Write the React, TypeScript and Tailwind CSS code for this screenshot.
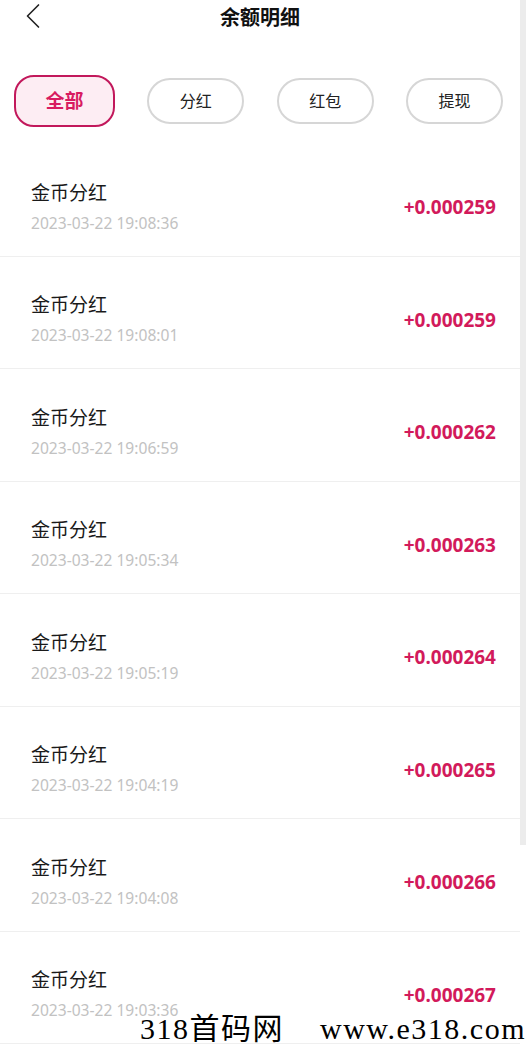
import { ChevronLeft } from "lucide-react";

const tabs = ["全部", "分红", "红包", "提现"];

const records = [
  { time: "2023-03-22 19:08:36", amount: "+0.000259" },
  { time: "2023-03-22 19:08:01", amount: "+0.000259" },
  { time: "2023-03-22 19:06:59", amount: "+0.000262" },
  { time: "2023-03-22 19:05:34", amount: "+0.000263" },
  { time: "2023-03-22 19:05:19", amount: "+0.000264" },
  { time: "2023-03-22 19:04:19", amount: "+0.000265" },
  { time: "2023-03-22 19:04:08", amount: "+0.000266" },
  { time: "2023-03-22 19:03:36", amount: "+0.000267" },
];

export default function App() {
  return (
    <div
      className="relative flex h-[1045px] w-[526px] overflow-hidden bg-white"
      style={{ fontFamily: '"Noto Sans", "Noto Sans CJK SC", sans-serif' }}
    >
      <div className="flex w-[520px] flex-col">
        {/* 顶部标题 */}
        <div className="relative flex h-[36px] items-center justify-center">
          <ChevronLeft className="absolute left-[11px] top-[-6px] h-[44px] w-[44px] text-[#222]" strokeWidth={0.9} />
          <h1 className="text-[20px] font-bold leading-none text-[#111]">余额明细</h1>
        </div>

        {/* 筛选标签 */}
        <div className="mt-[39px] flex h-[52px] items-center justify-between pl-[14px] pr-[17px]">
          {tabs.map((t, i) =>
            i === 0 ? (
              <div
                key={t}
                className="flex h-[52px] w-[101px] items-center justify-center rounded-[20px] border-2 border-[#c2185b] bg-[#fdedf3] text-[19px] font-bold text-[#d81b60]"
              >
                {t}
              </div>
            ) : (
              <div
                key={t}
                className="flex h-[46px] w-[97px] items-center justify-center rounded-full border-2 border-[#d6d6d6] text-[16px] text-[#222]"
              >
                {t}
              </div>
            )
          )}
        </div>

        {/* 明细列表 */}
        <div className="mt-[17px] flex flex-col">
          {records.map((r, i) => (
            <div
              key={i}
              className="flex h-[112.5px] shrink-0 items-center justify-between border-b border-[#efefef] pl-[31px] pr-[24px] pt-[15px]"
            >
              <div className="flex flex-col">
                <span className="text-[19px] leading-[24px] text-[#1a1a1a]">金币分红</span>
                <span className="mt-[7px] text-[15.6px] leading-[22px] text-[#c2c2c2]">{r.time}</span>
              </div>
              <span className="text-[19px] font-bold text-[#d21a5b]">{r.amount}</span>
            </div>
          ))}
        </div>
      </div>

      {/* 滚动条 */}
      <div className="w-[6px]">
        <div className="h-[845px] w-full bg-[#ececec]" />
      </div>

      {/* 水印 */}
      <div
        className="absolute bottom-[-4px] left-[140px] flex gap-[36px] whitespace-nowrap text-[30px] leading-[40px] tracking-[1.5px] text-black"
        style={{ fontFamily: '"Liberation Serif", "Noto Sans CJK SC", serif' }}
      >
        <span>318首码网</span>
        <span>www.e318.com</span>
      </div>
    </div>
  );
}
